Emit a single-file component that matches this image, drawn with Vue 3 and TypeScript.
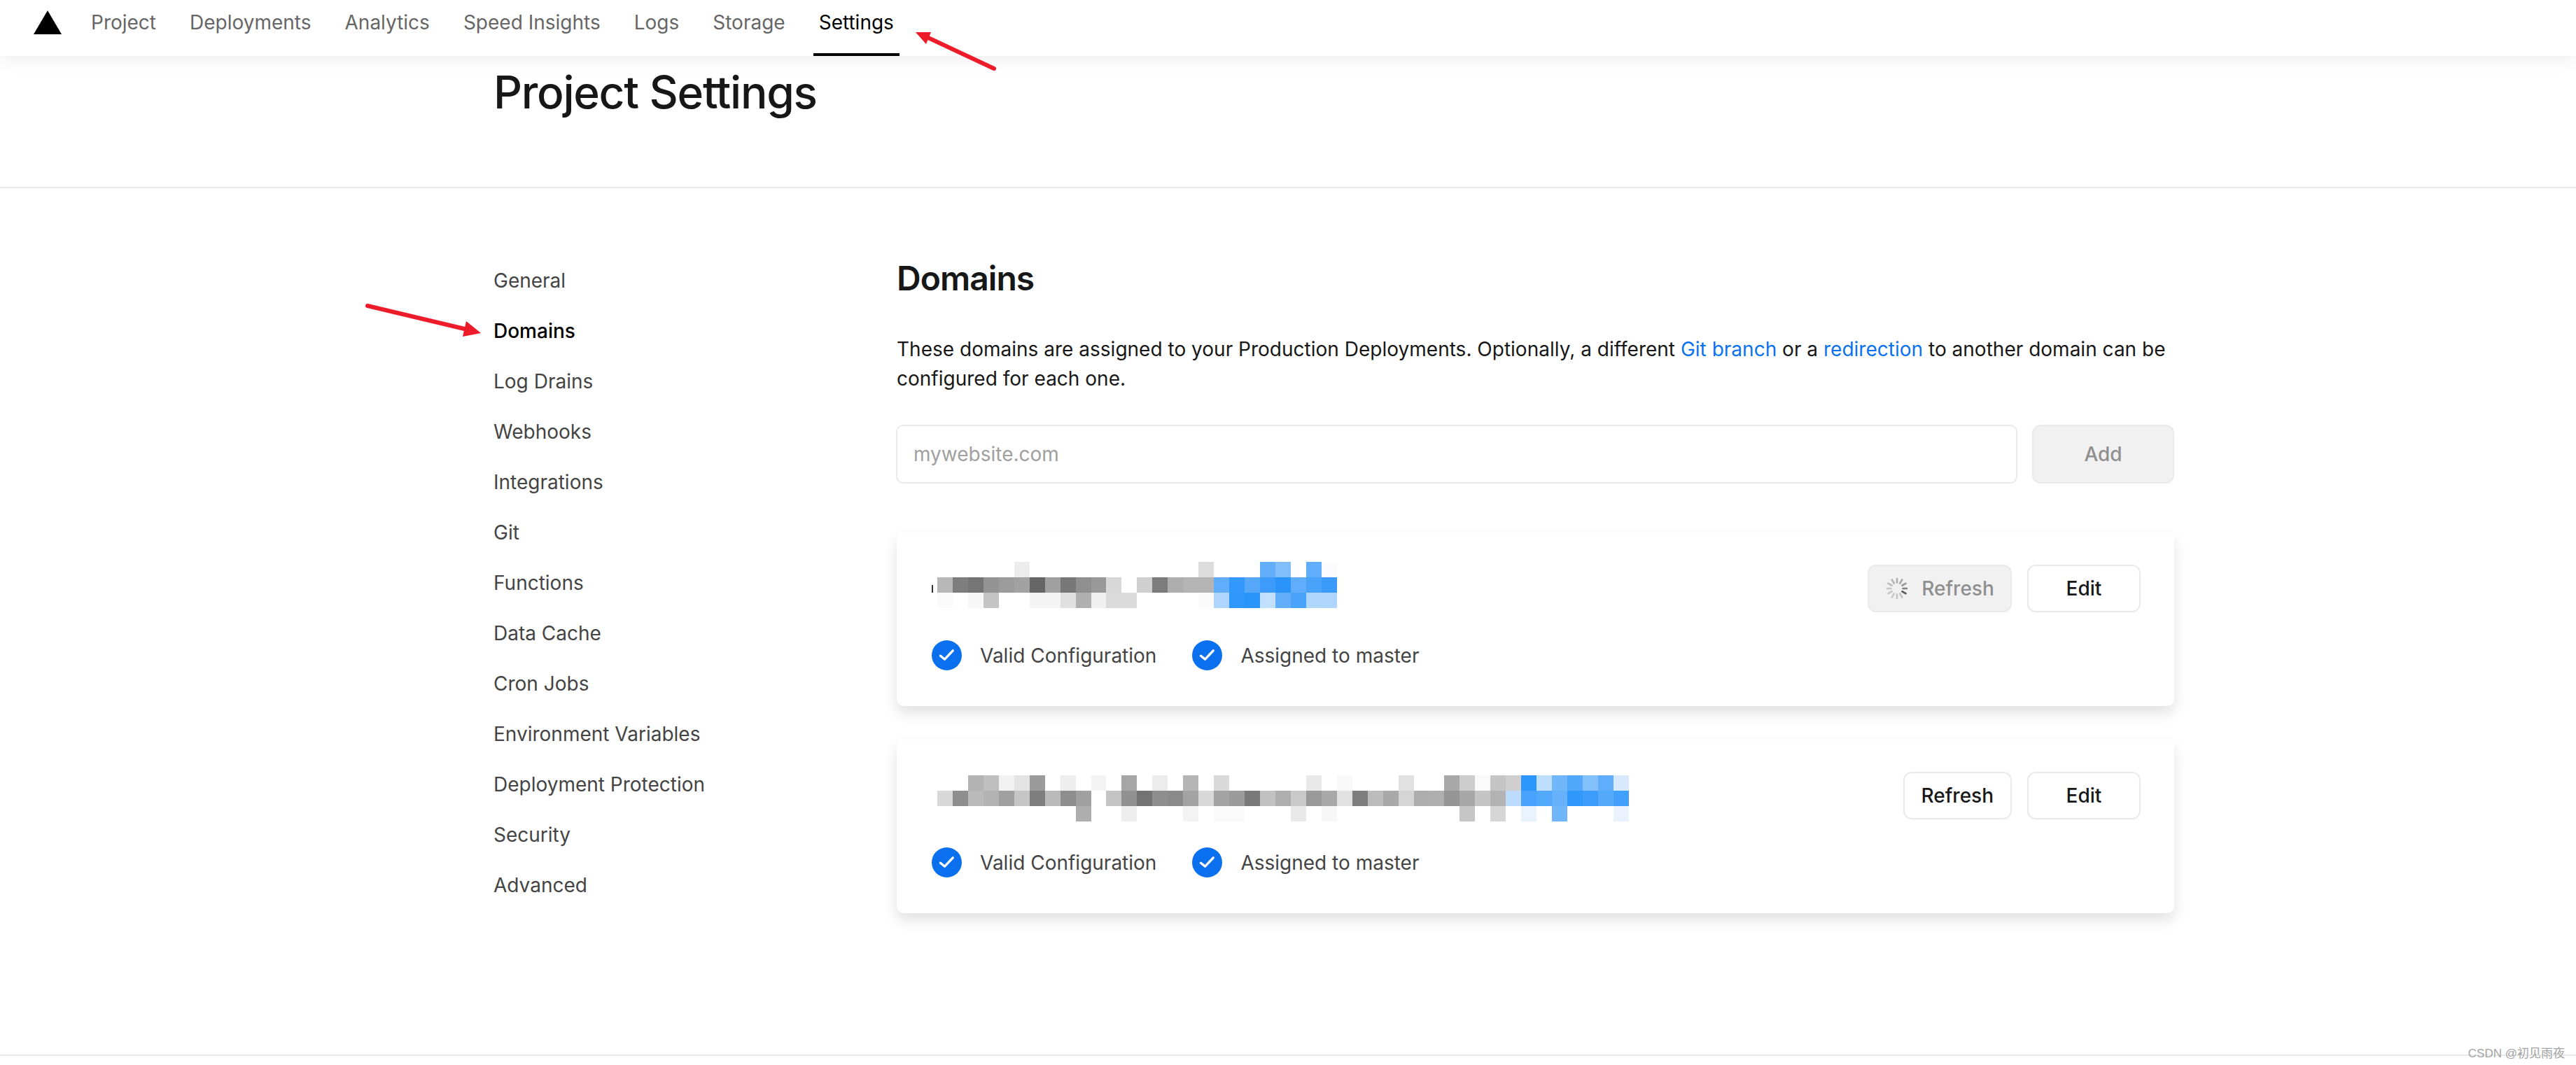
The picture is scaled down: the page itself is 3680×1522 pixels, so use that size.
<script setup lang="ts">
const navItems: string[] = ['Project', 'Deployments', 'Analytics', 'Speed Insights', 'Logs', 'Storage', 'Settings']
const sideItems: string[] = ['General', 'Domains', 'Log Drains', 'Webhooks', 'Integrations', 'Git', 'Functions', 'Data Cache', 'Cron Jobs', 'Environment Variables', 'Deployment Protection', 'Security', 'Advanced']

// Blurred hostnames: one token per mosaic cell; "." is blank, two digits mean a grey.
const mosaicA: string = `
. . . . . ec . . . . . . . . . . . dc . . . 62aefa 82bdfb . 60aefb fcfcff
b8 7e 75 94 9c a2 66 a0 77 8f 99 d8 . cf 7c ad b4 b4 5fadfb 3398fb 56a8fb 3d9cfb 2b94fb 60aefb 4aa3fb 3a9bfb
fa . f7 c4 . . f4 f4 e0 b0 f0 da da . . . . fb aed5fd 2f96fb 2b94fb c2e0fd 62aefb 4aa3fb b0d6fd aed5fd`

const mosaicB: string = `
. . b3 bf f2 e3 9b . ee . f4 . a6 . ec . b5 . d9 . . . . . e9 . f8 . . . e1 . . a8 cd fa c5 cf 2b96fd bfdefc 70b6fb 50a7fb 84c0fc 60aefb d6e9fd
d8 8e ba b3 a0 c6 7e ba 8e a0 . c4 90 73 8e 8a a3 d8 a3 9b 79 c1 af c9 9a a9 e1 7e bc a9 d5 ad af 95 a7 c5 b3 bddcfd 47a3fd 52a8fb 66b1fb 3097fb 3b9cfb 55a9fb 40a0fb
. . . . . . . . . ae . . ee . . . f3 . fa fa . . . e9 . f6 . . . . . . . . c6 . d6 . eaf3fd . 70b6fb . . . eaf3fd`

function cells(source: string): string[] {
  return source.trim().split(/\s+/).map((t) => {
    if (t === '.') return 'transparent'
    return t.length === 2 ? `#${t}${t}${t}` : `#${t}`
  })
}

interface Domain {
  key: string
  mosaic: string[]
  refreshing: boolean
}

const domains: Domain[] = [
  { key: 'a', mosaic: cells(mosaicA), refreshing: true },
  { key: 'b', mosaic: cells(mosaicB), refreshing: false },
]

const spokes = Array.from({ length: 12 }, (_, i) => ({
  angle: i * 30,
  // darkest around four o'clock, fading counter-clockwise
  opacity: [0.42, 0.48, 0.55, 0.72, 0.95, 0.3, 0.28, 0.26, 0.26, 0.28, 0.32, 0.38][i],
}))
</script>

<template>
  <div class="page">
    <nav class="topbar">
      <svg class="logo" viewBox="0 0 40 34" aria-hidden="true"><polygon points="20,0 40,34 0,34" fill="#000" /></svg>
      <ul class="tabs">
        <li v-for="item in navItems" :key="item" class="tab" :class="{ 'tab-active': item === 'Settings' }">{{ item }}</li>
      </ul>
    </nav>

    <header class="title-band">
      <h1 class="page-title">Project Settings</h1>
    </header>

    <main class="content">
      <ul class="sidebar">
        <li v-for="item in sideItems" :key="item" class="side-item" :class="{ 'side-active': item === 'Domains' }">{{ item }}</li>
      </ul>

      <section class="panel">
        <h2 class="panel-title">Domains</h2>
        <p class="panel-text">
          These domains are assigned to your Production Deployments. Optionally, a different
          <a class="link">Git branch</a> or a <a class="link">redirection</a> to another domain can be
          configured for each one.
        </p>

        <div class="add-row">
          <input class="domain-input" type="text" placeholder="mywebsite.com" />
          <button class="btn btn-disabled btn-add" type="button">Add</button>
        </div>

        <article v-for="d in domains" :key="d.key" class="card">
          <div class="card-top">
            <div class="mosaic" :class="`mosaic-${d.key}`">
              <span v-for="(c, i) in d.mosaic" :key="i" class="cell" :style="{ background: c }"></span>
            </div>
            <div class="actions">
              <button v-if="d.refreshing" class="btn btn-disabled btn-refresh-busy" type="button">
                <svg class="spinner" viewBox="-15 -15 30 30" aria-hidden="true">
                  <line
                    v-for="s in spokes"
                    :key="s.angle"
                    x1="0"
                    y1="-8.5"
                    x2="0"
                    y2="-14.5"
                    stroke="#555"
                    stroke-width="2.6"
                    stroke-linecap="round"
                    :opacity="s.opacity"
                    :transform="`rotate(${s.angle})`"
                  />
                </svg>
                Refresh
              </button>
              <button v-else class="btn" type="button">Refresh</button>
              <button class="btn btn-edit" type="button">Edit</button>
            </div>
          </div>
          <div class="status-row">
            <div v-for="label in ['Valid Configuration', 'Assigned to master']" :key="label" class="status">
              <svg class="check" viewBox="0 0 43 43" aria-hidden="true">
                <circle cx="21.5" cy="21.5" r="21.5" fill="#0b70ee" />
                <path d="M12.5 22.2 18.6 27.2 30.2 14.8" fill="none" stroke="#fff" stroke-width="3.4" stroke-linecap="round" stroke-linejoin="round" />
              </svg>
              <span>{{ label }}</span>
            </div>
          </div>
        </article>
      </section>
    </main>

    <footer class="footer"></footer>

    <svg class="annotation arrow-nav" viewBox="0 0 120 60" aria-hidden="true">
      <line x1="112" y1="52" x2="16" y2="7" stroke="#ee1c2a" stroke-width="6" stroke-linecap="round" />
      <polygon points="0,0 22,0 15,17" fill="#ee1c2a" />
    </svg>
    <svg class="annotation arrow-side" viewBox="0 0 170 50" aria-hidden="true">
      <line x1="3" y1="3" x2="150" y2="38" stroke="#ee1c2a" stroke-width="6" stroke-linecap="round" />
      <polygon points="144,25 165,42 139,47" fill="#ee1c2a" />
    </svg>

    <div class="watermark">CSDN @初见雨夜</div>
  </div>
</template>

<style>
html,
body {
  margin: 0;
  background: #fff;
}
</style>

<style scoped>
.page {
  position: relative;
  display: flex;
  flex-direction: column;
  height: 1522px;
  overflow: hidden;
  background: #fff;
  font-family: Inter, "Noto Sans", sans-serif;
  font-size: 28px;
  line-height: 42px;
  color: #171717;
}

.topbar {
  position: relative;
  z-index: 2;
  display: flex;
  flex: none;
  align-items: flex-start;
  height: 80px;
  padding-left: 48px;
  background: #fff;
  box-shadow: 0 0 30px rgba(0, 0, 0, 0.1);
}

.logo {
  width: 40px;
  height: 34px;
  margin-top: 15px;
}

.tabs {
  display: flex;
  gap: 32px;
  margin: 0 0 0 34px;
  padding: 0;
  list-style: none;
}

.tab {
  height: 80px;
  box-sizing: border-box;
  padding: 11px 8px 0;
  color: #666;
}

.tab-active {
  color: #000;
  border-bottom: 4px solid #000;
}

.title-band {
  flex: none;
  box-sizing: border-box;
  height: 189px;
  padding: 12px 0 0 705px;
  border-bottom: 2px solid #eaeaea;
}

.page-title {
  margin: 0;
  font-size: 64px;
  font-weight: 500;
  line-height: 80px;
  letter-spacing: -0.02em;
  color: #171717;
}

.content {
  display: grid;
  flex: 1;
  grid-template-columns: 576px 1825px;
  padding: 99px 0 0 705px;
}

.sidebar {
  display: flex;
  flex-direction: column;
  gap: 30px;
  margin: 12px 0 0;
  padding: 0;
  list-style: none;
}

.side-item {
  color: #444;
}

.side-active {
  color: #000;
  font-weight: 500;
}

.panel-title {
  margin: 2px 0 0;
  font-size: 48px;
  font-weight: 600;
  line-height: 56px;
  letter-spacing: -0.02em;
  color: #171717;
}

.panel-text {
  margin: 52px 0 45px;
  letter-spacing: 0.01px;
  color: #171717;
}

.link {
  color: #0a72ef;
}

.add-row {
  display: flex;
  gap: 21px;
  height: 84px;
  margin-bottom: 70px;
}

.domain-input {
  flex: 1;
  min-width: 0;
  box-sizing: border-box;
  margin-left: -1px;
  padding: 0 23px;
  border: 2px solid #eaeaea;
  border-radius: 10px;
  outline: none;
  background: #fff;
  font: inherit;
  color: #171717;
}

.domain-input::placeholder {
  color: #a0a0a0;
  opacity: 1;
}

.btn {
  display: inline-flex;
  align-items: center;
  justify-content: center;
  box-sizing: border-box;
  height: 68px;
  padding: 0 24px;
  border: 2px solid #eaeaea;
  border-radius: 12px;
  background: #fff;
  font: inherit;
  font-weight: 500;
  color: #171717;
}

.btn-disabled {
  background: #f1f1f1;
  color: #8f8f8f;
}

.btn-add {
  flex: none;
  width: 203px;
  height: 84px;
}

.btn-refresh-busy {
  gap: 20px;
  width: 206px;
  padding: 0 24px 0 26px;
}

.btn-edit {
  width: 162px;
}

.spinner {
  flex: none;
  width: 30px;
  height: 30px;
}

.card {
  box-sizing: border-box;
  height: 248px;
  margin-bottom: 48px;
  padding: 46px 48px 0 50px;
  border-radius: 10px;
  background: #fff;
  box-shadow: 0 10px 20px rgba(0, 0, 0, 0.12);
}

.card-top {
  display: flex;
  align-items: flex-start;
  justify-content: space-between;
  height: 68px;
  margin-bottom: 40px;
}

.mosaic {
  position: relative;
  display: grid;
  grid-auto-rows: 22px;
  margin-left: 8px;
}

.mosaic-a {
  grid-template-columns: repeat(26, 21.96px);
  margin-top: -4px;
}

.mosaic-a::before {
  content: "";
  position: absolute;
  left: -8px;
  top: 33px;
  width: 2px;
  height: 11px;
  background: #333;
}

.mosaic-b {
  grid-template-columns: repeat(45, 21.96px);
  margin-top: 5px;
}

.actions {
  display: flex;
  gap: 22px;
}

.status-row {
  display: flex;
  gap: 51px;
  color: #444;
}

.status {
  display: flex;
  align-items: center;
  gap: 26px;
}

.check {
  flex: none;
  width: 43px;
  height: 43px;
}

.footer {
  flex: none;
  height: 15px;
  border-top: 2px solid #eaeaea;
  box-sizing: border-box;
}

.annotation {
  position: absolute;
  z-index: 3;
  overflow: visible;
}

.arrow-nav {
  left: 1308px;
  top: 46px;
  width: 120px;
  height: 60px;
}

.arrow-side {
  left: 522px;
  top: 434px;
  width: 170px;
  height: 50px;
}

.watermark {
  position: absolute;
  z-index: 3;
  right: 16px;
  top: 1494px;
  font-family: "Liberation Sans", "Noto Sans CJK SC", sans-serif;
  font-size: 17px;
  line-height: 24px;
  color: #a3a3a3;
}
</style>
